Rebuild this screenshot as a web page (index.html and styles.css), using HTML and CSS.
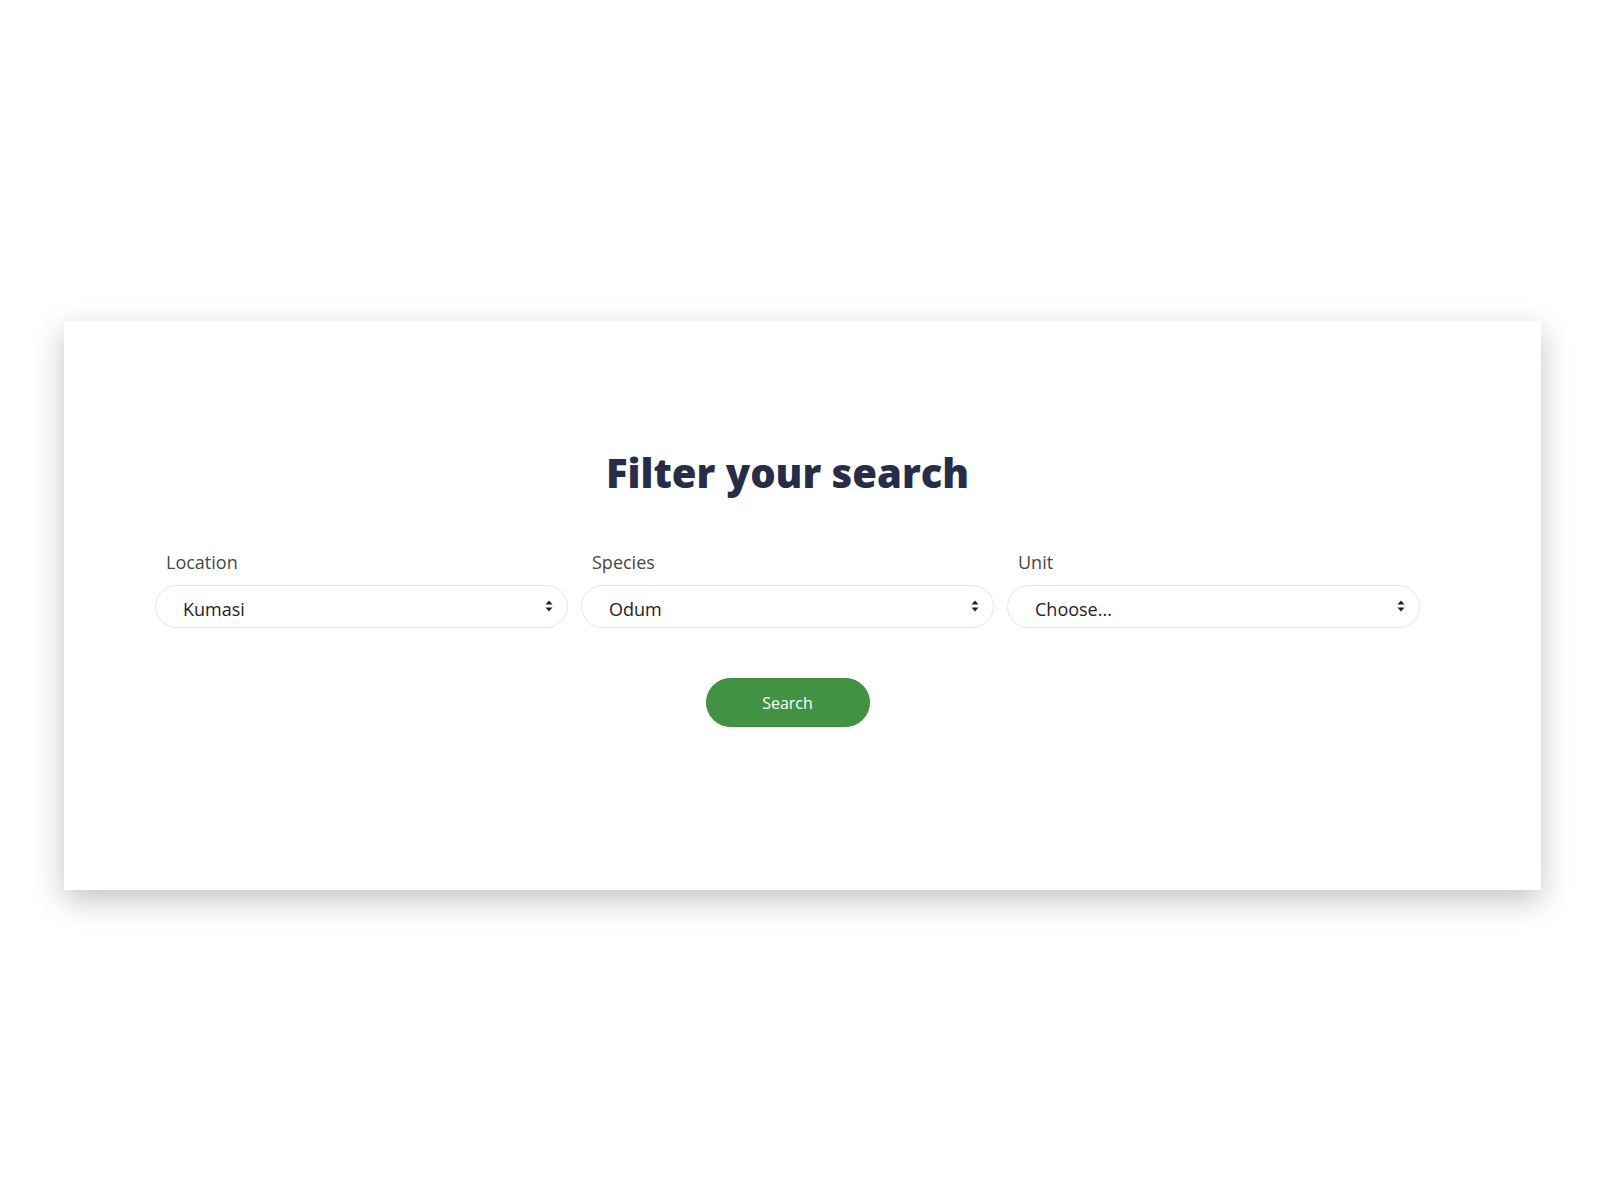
FILE: index.html
```html
<!DOCTYPE html>
<html lang="en">
<head>
<meta charset="utf-8">
<title>Filter your search</title>
<link rel="stylesheet" href="styles.css">
</head>
<body>
<main class="page">
<section class="card">
  <h1 class="title">Filter your search</h1>
  <form class="filters">
    <div class="field">
      <label class="label" for="loc">Location</label>
      <div class="select-wrap">
        <select id="loc" class="select"><option>Kumasi</option></select>
        <svg class="arrow" width="8" height="12" viewBox="0 0 8 12"><path d="M4 0.5L7.5 4.5H0.5Z M4 11.5L7.5 7.5H0.5Z" fill="#222"/></svg>
      </div>
    </div>
    <div class="field">
      <label class="label" for="sp">Species</label>
      <div class="select-wrap">
        <select id="sp" class="select"><option>Odum</option></select>
        <svg class="arrow" width="8" height="12" viewBox="0 0 8 12"><path d="M4 0.5L7.5 4.5H0.5Z M4 11.5L7.5 7.5H0.5Z" fill="#222"/></svg>
      </div>
    </div>
    <div class="field">
      <label class="label" for="un">Unit</label>
      <div class="select-wrap">
        <select id="un" class="select"><option>Choose...</option></select>
        <svg class="arrow" width="8" height="12" viewBox="0 0 8 12"><path d="M4 0.5L7.5 4.5H0.5Z M4 11.5L7.5 7.5H0.5Z" fill="#222"/></svg>
      </div>
    </div>
  </form>
  <div class="actions">
    <button class="btn" type="button">Search</button>
  </div>
</section>
</main>
</body>
</html>
```
FILE: styles.css
```css
html, body {
  margin: 0;
  padding: 0;
  background: #ffffff;
  font-family: "Open Sans", "Liberation Sans", sans-serif;
}
.page {
  min-height: 1200px;
  padding-top: 321px;
  box-sizing: border-box;
}
.card {
  box-sizing: border-box;
  margin: 0 0 0 64px;
  width: 1477px;
  height: 569px;
  background: #fff;
  box-shadow: 0 10px 30px rgba(0, 0, 0, 0.24);
  padding: 128px 121px 0 91px;
}
.title {
  margin: 0;
  text-align: center;
  font-size: 40px;
  line-height: 48px;
  font-weight: 800;
  color: #272c48;
}
.filters {
  display: grid;
  grid-template-columns: repeat(3, 413px);
  column-gap: 13px;
  margin-top: 52px;
}
.field {
  display: flex;
  flex-direction: column;
}
.label {
  font-size: 18px;
  line-height: 27px;
  color: #474747;
  padding-left: 11px;
  margin-bottom: 9px;
}
.select-wrap {
  position: relative;
}
.select {
  appearance: none;
  -webkit-appearance: none;
  box-sizing: border-box;
  width: 100%;
  height: 43px;
  border: 1px solid #e6e6e6;
  border-radius: 22px;
  background: #fff;
  font-family: "Open Sans", "Liberation Sans", sans-serif;
  font-size: 18px;
  color: #222;
  padding: 5px 40px 0 27px;
  outline: none;
}
.arrow {
  position: absolute;
  right: 15px;
  top: 15px;
  pointer-events: none;
}
.actions {
  display: flex;
  justify-content: center;
  margin-top: 50px;
}
.btn {
  width: 164px;
  height: 49px;
  border: 1px solid #3a8a3b;
  border-radius: 25px;
  background: #419343;
  color: #fff;
  font-family: "Open Sans", "Liberation Sans", sans-serif;
  font-size: 16px;
  padding: 0;
}
```
